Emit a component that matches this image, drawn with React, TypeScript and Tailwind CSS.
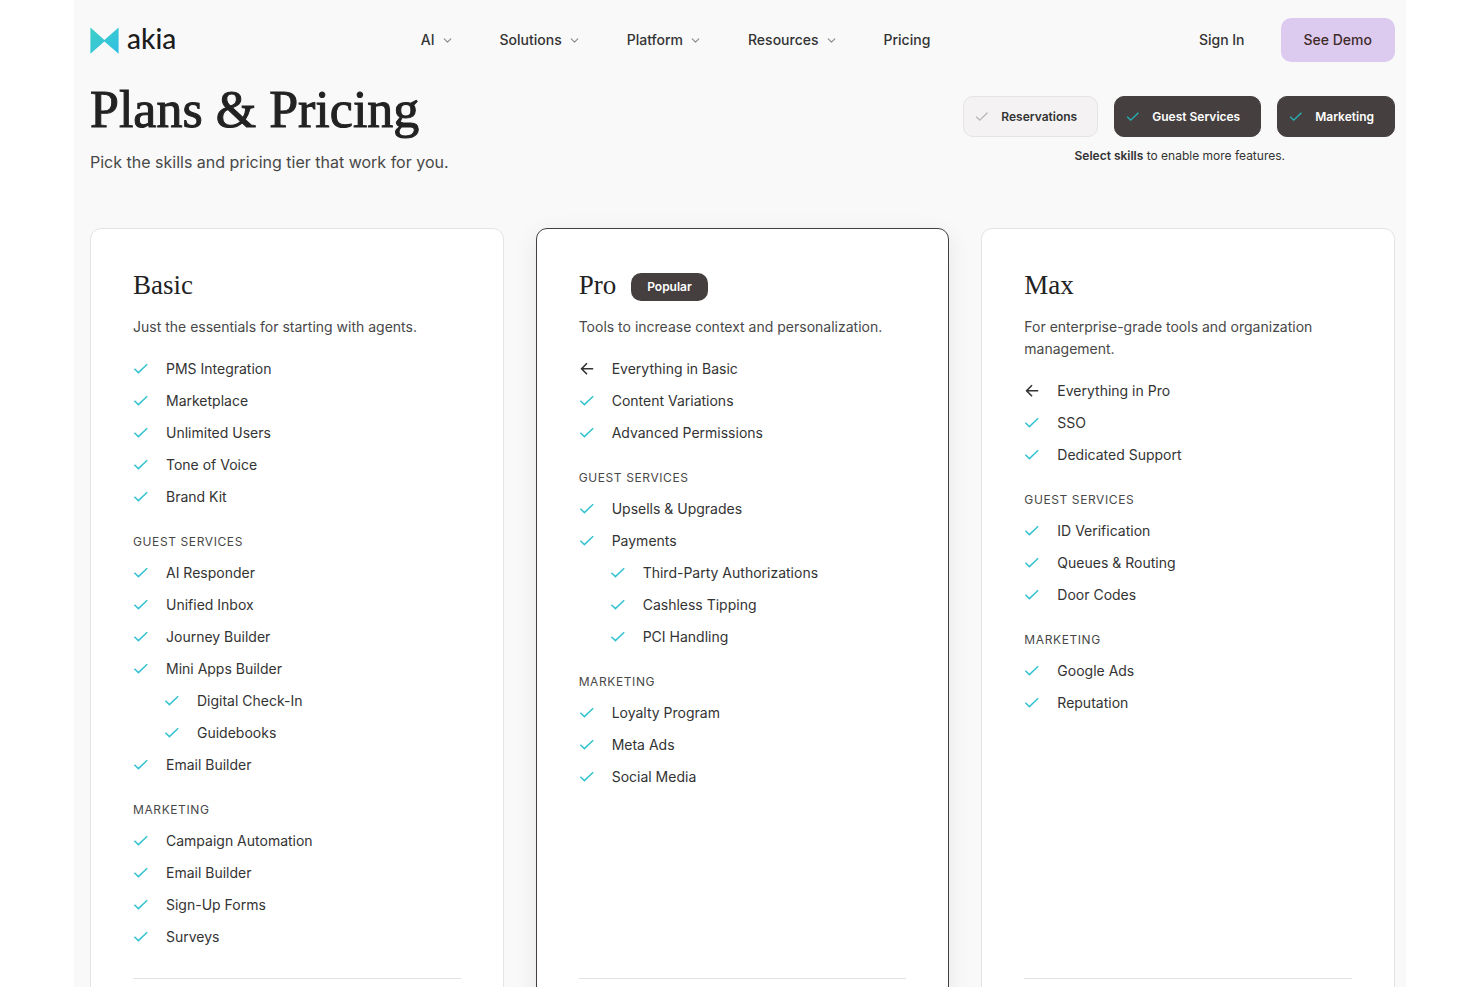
import { useState } from 'react'
import { ChevronDown } from 'lucide-react'
import clsx from 'clsx'

type Item = { label: string; nested?: boolean; inherited?: boolean }
type Section = { title?: string; items: Item[] }
type Plan = { name: string; description: string; popular?: boolean; sections: Section[] }

const plans: Plan[] = [
  {
    name: 'Basic',
    description: 'Just the essentials for starting with agents.',
    sections: [
      {
        items: [
          { label: 'PMS Integration' },
          { label: 'Marketplace' },
          { label: 'Unlimited Users' },
          { label: 'Tone of Voice' },
          { label: 'Brand Kit' },
        ],
      },
      {
        title: 'Guest Services',
        items: [
          { label: 'AI Responder' },
          { label: 'Unified Inbox' },
          { label: 'Journey Builder' },
          { label: 'Mini Apps Builder' },
          { label: 'Digital Check-In', nested: true },
          { label: 'Guidebooks', nested: true },
          { label: 'Email Builder' },
        ],
      },
      {
        title: 'Marketing',
        items: [
          { label: 'Campaign Automation' },
          { label: 'Email Builder' },
          { label: 'Sign-Up Forms' },
          { label: 'Surveys' },
        ],
      },
    ],
  },
  {
    name: 'Pro',
    description: 'Tools to increase context and personalization.',
    popular: true,
    sections: [
      {
        items: [
          { label: 'Everything in Basic', inherited: true },
          { label: 'Content Variations' },
          { label: 'Advanced Permissions' },
        ],
      },
      {
        title: 'Guest Services',
        items: [
          { label: 'Upsells & Upgrades' },
          { label: 'Payments' },
          { label: 'Third-Party Authorizations', nested: true },
          { label: 'Cashless Tipping', nested: true },
          { label: 'PCI Handling', nested: true },
        ],
      },
      {
        title: 'Marketing',
        items: [{ label: 'Loyalty Program' }, { label: 'Meta Ads' }, { label: 'Social Media' }],
      },
    ],
  },
  {
    name: 'Max',
    description: 'For enterprise-grade tools and organization management.',
    sections: [
      {
        items: [
          { label: 'Everything in Pro', inherited: true },
          { label: 'SSO' },
          { label: 'Dedicated Support' },
        ],
      },
      {
        title: 'Guest Services',
        items: [{ label: 'ID Verification' }, { label: 'Queues & Routing' }, { label: 'Door Codes' }],
      },
      {
        title: 'Marketing',
        items: [{ label: 'Google Ads' }, { label: 'Reputation' }],
      },
    ],
  },
]

const navLinks = [
  { label: 'AI', menu: true },
  { label: 'Solutions', menu: true },
  { label: 'Platform', menu: true },
  { label: 'Resources', menu: true },
  { label: 'Pricing', menu: false },
]

function CheckMark({ className }: { className?: string }) {
  return (
    <svg viewBox="0 0 16 16" fill="none" stroke="currentColor" strokeWidth="1.5" className={className} aria-hidden="true">
      <path d="M1.4 7.8 5.4 11.6 14.2 3.2" />
    </svg>
  )
}

function BackArrow({ className }: { className?: string }) {
  return (
    <svg viewBox="0 0 16 16" fill="none" stroke="currentColor" strokeWidth="1.6" className={className} aria-hidden="true">
      <path d="M14.2 7.8H2.8M8 2.3 2.6 7.8 8 13.3" />
    </svg>
  )
}

function Logo() {
  return (
    <a href="#" className="flex items-center gap-2">
      <svg viewBox="0 0 29 27" className="h-[27px] w-[29px]" aria-hidden="true">
        <defs>
          <linearGradient id="wing" x1="0" y1="0" x2="1" y2="1">
            <stop offset="0" stopColor="#3ecfc6" />
            <stop offset="1" stopColor="#2fbfe4" />
          </linearGradient>
        </defs>
        <path fill="url(#wing)" d="M0.4 0.4 14.4 13 28.6 0.4V26.8L14.4 14.4 0.4 26.8Z" />
      </svg>
      <span className="pb-[5px] font-[Lato,sans-serif] text-[28px] leading-7 font-medium text-[#1c1c1c]">akia</span>
    </a>
  )
}

function Header() {
  return (
    <header className="flex h-20 items-center justify-between">
      <Logo />
      <nav className="flex gap-[46px] pr-6">
        {navLinks.map((link) => (
          <a key={link.label} href="#" className="flex items-center gap-[6px] text-sm font-medium">
            {link.label}
            {link.menu && <ChevronDown className="h-[13px] w-[13px] text-[#888888]" strokeWidth={2} />}
          </a>
        ))}
      </nav>
      <div className="flex items-center gap-9 text-sm font-medium">
        <a href="#">Sign In</a>
        <a href="#" className="rounded-[10px] bg-[#dccbef] px-[23px] py-3 text-[#3f2a2a]">
          See Demo
        </a>
      </div>
    </header>
  )
}

function SkillPicker() {
  const [skills, setSkills] = useState([
    { name: 'Reservations', on: false },
    { name: 'Guest Services', on: true },
    { name: 'Marketing', on: true },
  ])

  const toggle = (name: string) =>
    setSkills(skills.map((s) => (s.name === name ? { ...s, on: !s.on } : s)))

  return (
    <div className="flex flex-col items-end">
      <div className="flex gap-4">
        {skills.map((skill) => (
          <button
            key={skill.name}
            type="button"
            aria-pressed={skill.on}
            onClick={() => toggle(skill.name)}
            className={clsx(
              'flex h-[41px] items-center gap-3 rounded-[10px] border pr-5 pl-[11px] text-xs font-semibold',
              skill.on ? 'border-[#45403f] bg-[#45403f] text-white' : 'border-[#e6e3e4] bg-[#f4f2f3]',
            )}
          >
            <CheckMark className={clsx('h-3.5 w-3.5', skill.on ? 'text-[#25b3bb]' : 'text-[#b5b5b5]')} />
            {skill.name}
          </button>
        ))}
      </div>
      <p className="mt-[10px] mr-[110px] text-xs leading-[18px]">
        <span className="font-semibold">Select skills</span> to enable more features.
      </p>
    </div>
  )
}

function PlanCard({ plan }: { plan: Plan }) {
  return (
    <article
      className={clsx(
        'flex flex-col rounded-[11px] border bg-white px-[42px] pt-[42px] pb-10',
        plan.popular ? 'border-[#45403f] shadow-[0_6px_24px_rgba(0,0,0,0.08)]' : 'border-[#e4e4e4]',
      )}
    >
      <div className="flex h-[30px] items-end gap-[15px]">
        <h2 className="self-start font-['Liberation_Serif',serif] text-[27px] leading-7 text-[#222222]">
          {plan.name}
        </h2>
        {plan.popular && (
          <span className="rounded-[10px] bg-[#45403f] px-4 py-[5px] text-xs leading-[18px] font-semibold text-white">
            Popular
          </span>
        )}
      </div>
      <p className="mt-[15px] leading-[22px] text-[#484848]">{plan.description}</p>
      <div className="mt-5 grow">
        {plan.sections.map((section, i) => (
          <section key={i} className={clsx(section.title && 'mt-[25px]')}>
            {section.title && (
              <h3 className="mb-[11px] text-xs leading-[18px] tracking-wider text-[#484848] uppercase">
                {section.title}
              </h3>
            )}
            <ul className="space-y-[10px]">
              {section.items.map((item) => (
                <li
                  key={item.label}
                  className={clsx('flex items-center gap-[17px] leading-[22px]', item.nested && 'pl-[31px]')}
                >
                  {item.inherited ? (
                    <BackArrow className="h-4 w-4" />
                  ) : (
                    <CheckMark className="h-4 w-4 text-[#35c4cf]" />
                  )}
                  {item.label}
                </li>
              ))}
            </ul>
          </section>
        ))}
      </div>
      <hr className="mt-[30px] border-[#e2e2e2]" />
    </article>
  )
}

export default function App() {
  return (
    <div className="min-h-screen bg-white font-[Inter,sans-serif] text-sm text-[#333333]">
      <div className="mx-auto min-h-screen w-[90%] bg-[#f9f9f9] pr-[11px] pb-16 pl-4">
        <Header />
        <main>
          <div className="flex items-start justify-between">
            <div>
              <h1 className="font-['Liberation_Serif',serif] text-[52px] leading-[60px] text-[#222222] [-webkit-text-stroke:1px_#222222]">
                Plans &amp; Pricing
              </h1>
              <p className="mt-[10px] text-base leading-6 text-[#484848]">
                Pick the skills and pricing tier that work for you.
              </p>
            </div>
            <div className="pt-4">
              <SkillPicker />
            </div>
          </div>
          <div className="mt-[54px] grid grid-cols-3 gap-8">
            {plans.map((plan) => (
              <PlanCard key={plan.name} plan={plan} />
            ))}
          </div>
        </main>
      </div>
    </div>
  )
}
